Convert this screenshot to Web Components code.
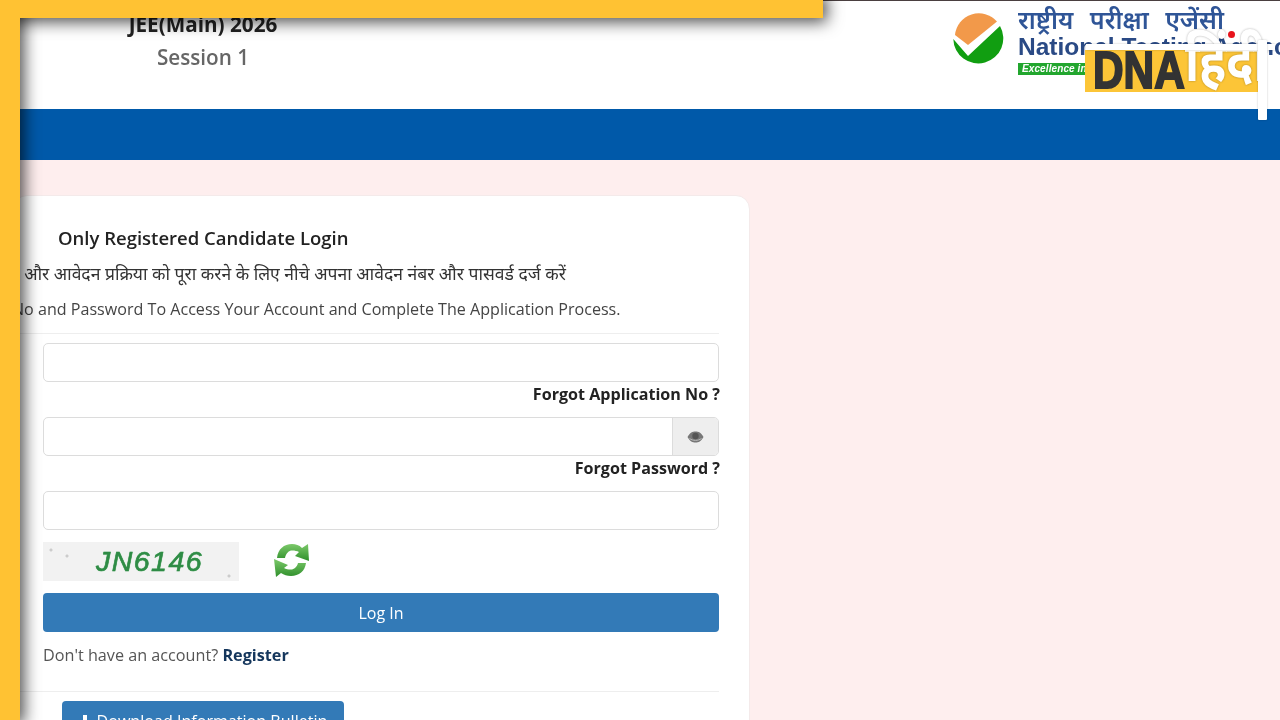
<!DOCTYPE html>
<html lang="en">
<head>
<meta charset="utf-8">
<title>JEE(Main) 2026 Session 1</title>
<style>
  html, body { margin: 0; height: 720px; overflow: hidden; background: #feeeee; }
  body { font-family: "Open Sans", "Noto Sans", "Liberation Sans", sans-serif; position: relative; filter: blur(.35px); }
</style>
</head>
<body>
<site-header></site-header>
<blue-band></blue-band>
<login-page>
  <login-card></login-card>
</login-page>
<promo-frame></promo-frame>
<dna-logo></dna-logo>

<script>
class SiteHeader extends HTMLElement {
    constructor() {
        super();
        this.attachShadow({ mode: 'open' });
    }

    connectedCallback() {
        this.shadowRoot.innerHTML = `
            <style>
                :host {
                    display: flex;
                    box-sizing: border-box;
                    height: 109px;
                    background: #fff;
                    border-top: 1px solid #4a3f40;
                    overflow: hidden;
                    justify-content: space-between;
                }
                .title {
                    width: 150px;
                    margin-left: 128px;
                    padding-top: 9px;
                    text-align: center;
                    white-space: nowrap;
                }
                .title b { display: block; font-size: 20.7px; line-height: 28px; color: #222; }
                .title span { display: block; font-size: 20.7px; line-height: 28px; margin-top: 5px; color: #666; font-weight: 600; }
            </style>
            <div class="title">
                <b>JEE(Main) 2026</b>
                <span>Session 1</span>
            </div>
            <nta-logo></nta-logo>
        `;
    }
}

class NtaLogo extends HTMLElement {
    constructor() {
        super();
        this.attachShadow({ mode: 'open' });
    }

    connectedCallback() {
        this.shadowRoot.innerHTML = `
            <style>
                :host {
                    display: flex;
                    width: 327px;
                    padding-top: 11px;
                    gap: 13px;
                    white-space: nowrap;
                    overflow: hidden;
                }
                svg { flex: none; width: 52px; height: 52px; }
                .hi { font: 600 25px/23px "Noto Sans Devanagari", "Noto Sans", sans-serif; color: #2f5597; word-spacing: 10px; }
                .en { font: 700 24.5px/28px "Liberation Sans", sans-serif; color: #2a4a85; margin-top: -2px; }
                .tag {
                    display: block;
                    width: fit-content;
                    margin-top: 2px;
                    font: italic 700 10px/12px "Liberation Sans", sans-serif;
                    color: #fff;
                    background: #22a62e;
                    padding: 0 4px;
                    letter-spacing: 0.1px;
                }
            </style>
            <svg viewBox="0 0 52 52">
                <path d="M2 23 A24 24 0 0 1 44 9.5 L15 33 Z" fill="#f2994a"/>
                <path d="M0.3 27 A25 25 0 1 0 47 14 L15 44 Z" fill="#119e11"/>
            </svg>
            <div>
                <div class="hi">राष्ट्रीय परीक्षा एजेंसी</div>
                <div class="en">National Testing Agency</div>
                <div class="tag">Excellence in Assessment</div>
            </div>
        `;
    }
}

class BlueBand extends HTMLElement {
    constructor() {
        super();
        this.attachShadow({ mode: 'open' });
        this.shadowRoot.innerHTML = `
            <style>
                :host { display: block; height: 51px; background: #0059a9; }
            </style>
        `;
    }
}

class LoginPage extends HTMLElement {
    constructor() {
        super();
        this.attachShadow({ mode: 'open' });
        this.shadowRoot.innerHTML = `
            <style>
                :host { display: block; padding: 35px 0 0 13px; }
            </style>
            <slot></slot>
        `;
    }
}

class TextField extends HTMLElement {
    constructor() {
        super();
        this.attachShadow({ mode: 'open' });
    }

    connectedCallback() {
        const hasEye = this.hasAttribute('eye');
        this.shadowRoot.innerHTML = `
            <style>
                :host { display: flex; height: 39px; box-sizing: border-box; border: 1.5px solid #dcdcdc; border-radius: 5px; overflow: hidden; background: #fff; }
                .box { flex: 1; }
                .addon { width: 45px; background: #eee; border-left: 1.5px solid #dcdcdc; display: flex; align-items: center; justify-content: center; }
            </style>
            <div class="box"></div>
            ${hasEye ? `
                <div class="addon">
                    <svg width="17" height="12" viewBox="0 0 17 12">
                        <path d="M0.5 6 C3 1.5 5.5 0.5 8.5 0.5 C11.5 0.5 14 1.5 16.5 6 C14 10.5 11.5 11.5 8.5 11.5 C5.5 11.5 3 10.5 0.5 6 Z" fill="#777"/>
                        <circle cx="8.5" cy="5" r="3.2" fill="#555"/>
                        <path d="M2.5 7.5 C6 10 11 10 14.5 7.5" fill="none" stroke="#bbb" stroke-width="1"/>
                    </svg>
                </div>
            ` : ''}
        `;
    }
}

class LoginCard extends HTMLElement {
    constructor() {
        super();
        this.attachShadow({ mode: 'open' });
    }

    connectedCallback() {
        this.shadowRoot.innerHTML = `
            <style>
                :host {
                    display: block;
                    box-sizing: border-box;
                    width: 737px;
                    height: 560px;
                    background: #fff;
                    border: 1px solid #f4eaea;
                    border-radius: 14px;
                    padding: 0 30px 0 29px;
                    color: #333;
                    font-size: 16px;
                    white-space: nowrap;
                }
                h2 { margin: 28px 0 0 15px; font-size: 18.5px; line-height: 28px; font-weight: 600; color: #222; }
                .hi { margin: 10px 0 0 -44px; font-size: 17.5px; line-height: 28px; font-family: "Noto Sans Devanagari", "Noto Sans", sans-serif; color: #333; }
                .en { margin: 6px 0 0 -31px; font-size: 16.1px; line-height: 27px; color: #444; }
                hr { border: 0; border-top: 1px solid #eee; margin: 10px 0 9px -30px; }
                .forgot { text-align: right; font-weight: 700; font-size: 16.1px; line-height: 22px; color: #222; margin: 1px -1px 12px 0; }
                .spaced { margin-bottom: 12px; }
                .captcha { display: flex; gap: 34px; height: 39px; margin-bottom: 12px; }
                .code {
                    box-sizing: border-box;
                    width: 196px;
                    height: 39px;
                    padding-left: 17px;
                    color: #2f8c46;
                    font: italic 400 28.5px/39px "Liberation Sans", sans-serif;
                    text-align: center;
                    letter-spacing: 1.5px;
                    -webkit-text-stroke: .6px #2f8c46;
                    text-shadow: 0 0 1px #7fd08c;
                    background:
                        radial-gradient(circle at 8px 8px, #ccc 1px, transparent 2px),
                        radial-gradient(circle at 24px 14px, #ccc 1px, transparent 2px),
                        radial-gradient(circle at 186px 34px, #ccc 1px, transparent 2px),
                        radial-gradient(circle at 224px 30px, #ccc 1px, transparent 2px),
                        #f2f2f2;
                }
                .captcha svg { margin-top: -1px; }
                button {
                    display: block;
                    width: 100%;
                    height: 39px;
                    border: 0;
                    border-radius: 4px;
                    background: #337ab7;
                    color: #fff;
                    font: 16px "Open Sans", sans-serif;
                }
                .account { margin: 10px 0 0; font-size: 16.2px; line-height: 27px; color: #555; }
                .account b { color: #14365c; }
                .bottom { margin: 22px 0 9px -30px; }
                .download {
                    width: 282px;
                    height: 40px;
                    margin-left: 19px;
                    display: flex;
                    justify-content: center;
                    align-items: center;
                    gap: 6px;
                    border-radius: 4px;
                    background: #337ab7;
                    color: #fff;
                    font-size: 16.1px;
                }
            </style>
            <h2>Only Registered Candidate Login</h2>
            <div class="hi">करें और आवेदन प्रक्रिया को पूरा करने के लिए नीचे अपना आवेदन नंबर और पासवर्ड दर्ज करें</div>
            <div class="en">No and Password To Access Your Account and Complete The Application Process.</div>
            <hr>
            <text-field></text-field>
            <div class="forgot">Forgot Application No ?</div>
            <text-field eye></text-field>
            <div class="forgot">Forgot Password ?</div>
            <text-field class="spaced"></text-field>
            <div class="captcha">
                <div class="code">JN6146</div>
                <svg width="38" height="38" viewBox="0 0 38 38">
                    <defs>
                        <linearGradient id="g" x1="0" y1="0" x2="0" y2="1">
                            <stop offset="0" stop-color="#7cc96a"/>
                            <stop offset="1" stop-color="#2f8f2b"/>
                        </linearGradient>
                    </defs>
                    <path d="M4 17 C5 8 11 3 19 3 C23 3 26 4 29 7 L35 3 L36 20 L22 15 L26 11 C24 10 22 9.5 19 9.5 C16 9.5 13 12 12 17 Z" fill="url(#g)"/>
                    <path d="M33 22 C32 30 26 35 18 35 C14 35 11 34 8 32 L3 36 L1 18 L15 24 L11 27 C13 28 15 28.5 18 28.5 C21 28.5 24 26 25 22 Z" fill="url(#g)"/>
                </svg>
            </div>
            <button>Log In</button>
            <div class="account">Don't have an account? <b>Register</b></div>
            <hr class="bottom">
            <div class="download">
                <svg width="12" height="13" viewBox="0 0 12 13"><path d="M4 0 H8 V5 H11.5 L6 10 L0.5 5 H4 Z M0 11 H12 V13 H0 Z" fill="#fff"/></svg>
                <span>Download Information Bulletin</span>
            </div>
        `;
    }
}

class PromoFrame extends HTMLElement {
    constructor() {
        super();
        this.attachShadow({ mode: 'open' });
        this.shadowRoot.innerHTML = `
            <style>
                :host { position: absolute; inset: 0; pointer-events: none; }
                .top, .left { position: absolute; left: 0; top: 0; background: #ffc233; box-shadow: 0 0 16px 4px rgba(0,0,0,.7); }
                .top { width: 823px; height: 18px; }
                .left { width: 20px; height: 720px; }
            </style>
            <div class="top"></div>
            <div class="left"></div>
            <div class="top" style="box-shadow:none"></div>
        `;
    }
}

class DnaLogo extends HTMLElement {
    constructor() {
        super();
        this.attachShadow({ mode: 'open' });
        this.shadowRoot.innerHTML = `
            <style>
                :host { position: absolute; left: 1085px; top: 44px; width: 190px; height: 78px; }
                .plate { position: absolute; left: 0; top: 6px; width: 173px; height: 42px; background: #fcc537; }
                .dna {
                    position: absolute;
                    left: 8px;
                    top: 0;
                    font: 700 51px/42px "Liberation Sans", sans-serif;
                    color: #333;
                    transform: scaleX(.83);
                    transform-origin: 0 50%;
                    -webkit-text-stroke: 2px #333;
                }
                .line { position: absolute; left: 1px; top: 0; width: 189px; height: 6px; background: #fff; box-shadow: 0 0 2px rgba(0,0,0,.25); }
                .stem { position: absolute; left: 173px; top: -4px; width: 9px; height: 80px; background: #fff; border-radius: 1px; box-shadow: 0 0 2px rgba(0,0,0,.25); }
                .hindi {
                    position: absolute;
                    left: 100px;
                    top: -18px;
                    font: 700 48px/84px "Noto Sans Devanagari", "Noto Sans", sans-serif;
                    color: #fff;
                    white-space: nowrap;
                    transform: scaleY(1.2);
                    transform-origin: 50% 50%;
                    filter: drop-shadow(0 0 1px rgba(0,0,0,.3));
                }
                .dot { position: absolute; left: 143px; top: -13px; width: 7px; height: 7px; border-radius: 50%; background: #e8141c; }
            </style>
            <div class="plate"><span class="dna">DNA</span></div>
            <span class="hindi">हिंदी</span>
            <div class="line"></div>
            <div class="stem"></div>
            <div class="dot"></div>
        `;
    }
}

customElements.define('site-header', SiteHeader);
customElements.define('nta-logo', NtaLogo);
customElements.define('blue-band', BlueBand);
customElements.define('login-page', LoginPage);
customElements.define('text-field', TextField);
customElements.define('login-card', LoginCard);
customElements.define('promo-frame', PromoFrame);
customElements.define('dna-logo', DnaLogo);
</script>
</body>
</html>
